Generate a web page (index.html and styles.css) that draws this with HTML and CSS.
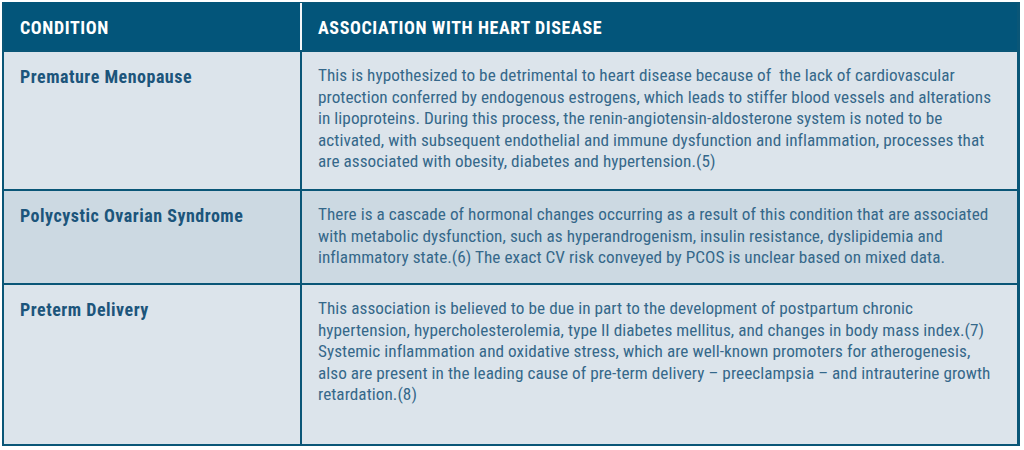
FILE: index.html
```html
<!DOCTYPE html>
<html>
<head>
<meta charset="utf-8">
<link rel="stylesheet" href="styles.css">
</head>
<body>
<div class="table">
  <div class="hcell">CONDITION</div>
  <div class="hcell hcell2">ASSOCIATION WITH HEART DISEASE</div>

  <div class="cell title">Premature Menopause</div>
  <div class="cell desc">This is hypothesized to be detrimental to heart disease because of&nbsp; the lack of cardiovascular<br>protection conferred by endogenous estrogens, which leads to stiffer blood vessels and alterations<br>in lipoproteins. During this process, the renin-angiotensin-aldosterone system is noted to be<br>activated, with subsequent endothelial and immune dysfunction and inflammation, processes that<br>are associated with obesity, diabetes and hypertension.(5)</div>

  <div class="cell title alt">Polycystic Ovarian Syndrome</div>
  <div class="cell desc alt">There is a cascade of hormonal changes occurring as a result of this condition that are associated<br>with metabolic dysfunction, such as hyperandrogenism, insulin resistance, dyslipidemia and<br>inflammatory state.(6) The exact CV risk conveyed by PCOS is unclear based on mixed data.</div>

  <div class="cell title">Preterm Delivery</div>
  <div class="cell desc">This association is believed to be due in part to the development of postpartum chronic<br>hypertension, hypercholesterolemia, type II diabetes mellitus, and changes in body mass index.(7)<br>Systemic inflammation and oxidative stress, which are well-known promoters for atherogenesis,<br>also are present in the leading cause of pre-term delivery – preeclampsia – and intrauterine growth<br>retardation.(8)</div>
</div>
</body>
</html>
```

FILE: styles.css
```css
html, body {
  margin: 0;
  padding: 0;
  background: #ffffff;
}

body {
  font-family: "Roboto Condensed", "DejaVu Sans Condensed", "Liberation Sans", sans-serif;
}

.table {
  margin: 2px 4px 0 2px;
  border-left: 2px solid #0a5677;
  border-right: 3px solid #0a5677;
  border-bottom: 2px solid #0a5677;
  background: #0a5677;
  display: grid;
  grid-template-columns: 296px 715px;
  grid-template-rows: 48px 137px 92px 159px;
  gap: 2px;
}

.hcell {
  background: #03557a;
  color: #ffffff;
  font-weight: bold;
  font-size: 18px;
  letter-spacing: 0.6px;
  display: flex;
  align-items: center;
  padding-left: 16px;
  padding-top: 2px;
}

.hcell2 {
  margin-left: -2px;
  margin-top: 1px;
  border-left: 2px solid #f4f7f9;
  padding-left: 16px;
  padding-top: 1px;
}

.cell {
  background: #dce4eb;
  padding: 13px 10px 0 16px;
  font-size: 17.2px;
  line-height: 21.5px;
}

.cell.alt {
  background: #ccd9e2;
}

.title {
  font-weight: bold;
  font-size: 18px;
  letter-spacing: 0.5px;
  color: #1c557b;
  padding-top: 14px;
}

.desc {
  color: #35688a;
  padding-left: 16px;
  letter-spacing: 0.05px;
  white-space: nowrap;
}
```
